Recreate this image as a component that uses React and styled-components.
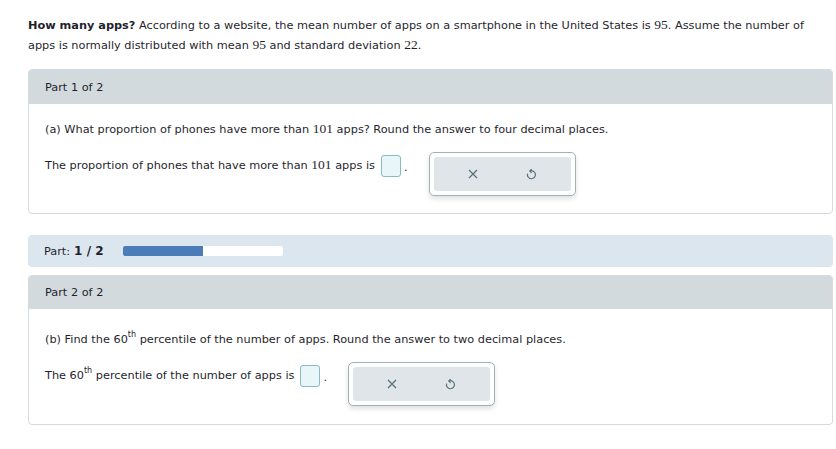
import React from "react";
import styled, { createGlobalStyle } from "styled-components";

const Global = createGlobalStyle`
  html, body { margin: 0; padding: 0; background: #fff; }
  body { font-family: "DejaVu Sans", Verdana, sans-serif; font-size: 11.3px; color: #1f1f2e; }
`;

const Page = styled.div`
  padding: 16px 3px 0 28px;
`;

const Intro = styled.p`
  margin: 0 0 13px;
  line-height: 20px;
  padding-right: 10px;
`;

const Num = styled.span`
  font-family: "Liberation Serif", "Times New Roman", serif;
  font-size: 13.5px;
  line-height: 1;
`;

const Card = styled.section`
  border: 1px solid #d3dbde;
  border-radius: 4px;
  overflow: hidden;
  margin-bottom: ${(p) => p.$mb || 0}px;
`;

const CardHeader = styled.div`
  background: #d2dade;
  height: ${(p) => p.$h}px;
  display: flex;
  align-items: center;
  padding-left: 16px;
`;

const CardBody = styled.div`
  padding: ${(p) => p.$pt}px 16px ${(p) => p.$pb}px 16px;
`;

const Question = styled.div`
  line-height: 18px;
  margin-bottom: ${(p) => p.$mb}px;
`;

const AnswerRow = styled.div`
  display: flex;
  align-items: flex-start;
`;

const AnswerText = styled.div`
  display: flex;
  align-items: center;
  height: 22px;
  margin-top: 3px;
  line-height: 18px;
`;

const Phrase = styled.span`
  white-space: pre;
`;

const InputBox = styled.span`
  display: inline-block;
  width: 18px;
  height: 20px;
  border: 1px solid #86bcc4;
  border-radius: 3px;
  background: #e8f5f9;
  margin-left: 6px;
`;

const Dot = styled.span`
  margin-left: 3px;
  margin-top: 4px;
`;

const ToolGroup = styled.div`
  margin-left: 21px;
  width: 137px;
  height: 34px;
  padding: 4px;
  border: 1px solid #a4b0b6;
  border-radius: 5px;
  background: #fff;
  box-shadow: 0 3px 5px rgba(0, 0, 0, 0.12);
  display: flex;
`;

const ToolInner = styled.div`
  flex: 1;
  background: #dfe5e8;
  border-radius: 3px;
  display: flex;
  align-items: center;
  justify-content: space-around;
  padding: 0 10px;
`;

const ProgressBar = styled.div`
  background: #dce6ef;
  border-radius: 4px;
  height: 32px;
  display: flex;
  align-items: center;
  padding-left: 16px;
  margin-bottom: 8px;
`;

const Bold = styled.b`
  font-weight: bold;
  font-size: 12px;
  margin-left: 4px;
`;

const Track = styled.div`
  margin-left: 19px;
  width: 160px;
  height: 10px;
  background: #fff;
  border-radius: 2px;
  overflow: hidden;
`;

const Fill = styled.div`
  height: 100%;
  background: #4a7db7;
`;

const Sup = styled.sup`
  font-size: 8px;
  vertical-align: 6px;
  line-height: 0;
`;

const XIcon = () => (
  <svg width="10" height="10" viewBox="0 0 10 10">
    <path d="M1 1L9 9M9 1L1 9" stroke="#56707b" strokeWidth="1.2" fill="none" />
  </svg>
);

const UndoIcon = () => (
  <svg width="11" height="13" viewBox="0 0 11 13">
    <path d="M4 3 A4 4 0 1 1 1.6 5.6" stroke="#56707b" strokeWidth="1.2" fill="none" />
    <path d="M5.6 1.2 L3.8 3 L5.6 4.8" stroke="#56707b" strokeWidth="1.2" fill="none" />
  </svg>
);

const Tools = () => (
  <ToolGroup>
    <ToolInner>
      <XIcon />
      <UndoIcon />
    </ToolInner>
  </ToolGroup>
);

export default function App() {
  return (
    <>
      <Global />
      <Page>
        <Intro>
          <b>How many apps?</b> According to a website, the mean number of apps on a smartphone in the United States is <Num>95</Num>. Assume the number of apps is normally distributed with mean <Num>95</Num> and standard deviation <Num>22</Num>.
        </Intro>

        <Card $mb={21}>
          <CardHeader $h={34}>Part 1 of 2</CardHeader>
          <CardBody $pt={17} $pb={17}>
            <Question $mb={13}>
              (a) What proportion of phones have more than <Num>101</Num> apps? Round the answer to four decimal places.
            </Question>
            <AnswerRow>
              <AnswerText>
                <Phrase>
                  The proportion of phones that have more than <Num>101</Num> apps is
                </Phrase>
                <InputBox />
                <Dot>.</Dot>
              </AnswerText>
              <Tools />
            </AnswerRow>
          </CardBody>
        </Card>

        <ProgressBar>
          Part:<Bold>1 / 2</Bold>
          <Track>
            <Fill style={{ width: "50%" }} />
          </Track>
        </ProgressBar>

        <Card>
          <CardHeader $h={33}>Part 2 of 2</CardHeader>
          <CardBody $pt={22} $pb={18}>
            <Question $mb={13}>
              (b) Find the 60<Sup>th</Sup> percentile of the number of apps. Round the answer to two decimal places.
            </Question>
            <AnswerRow>
              <AnswerText>
                <Phrase>
                  The 60<Sup>th</Sup> percentile of the number of apps is
                </Phrase>
                <InputBox />
                <Dot>.</Dot>
              </AnswerText>
              <Tools />
            </AnswerRow>
          </CardBody>
        </Card>
      </Page>
    </>
  );
}
